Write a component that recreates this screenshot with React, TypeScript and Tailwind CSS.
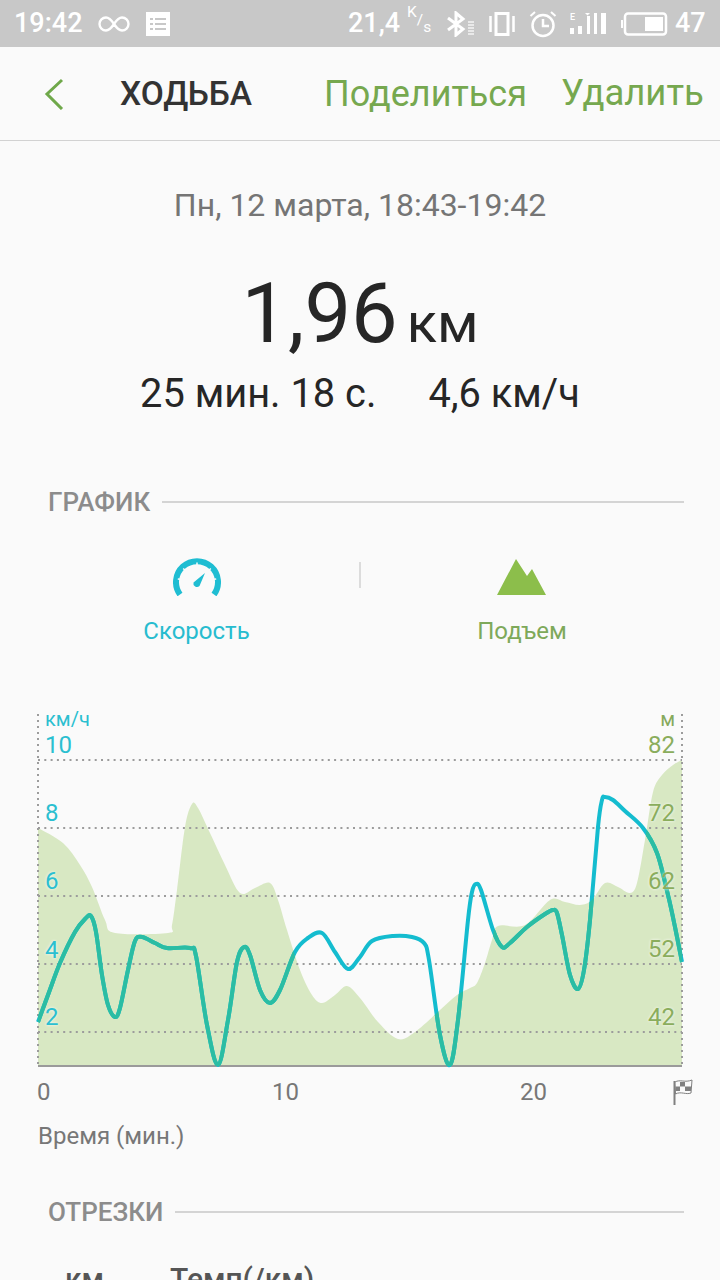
import { useMemo } from 'react'

type Point = [number, number]

const elevationPoints: Point[] = [
  [38, 828], [63, 843], [80, 865], [92, 887], [105, 920], [115, 933], [168, 933], [172, 925], [177, 890],
  [185, 827], [192, 804], [198, 808], [210, 833], [225, 865], [240, 893], [255, 888], [270, 883], [278, 900],
  [287, 930], [300, 970], [312, 995], [322, 1003], [335, 995], [347, 986], [360, 998], [378, 1022], [398, 1039],
  [415, 1032], [440, 1010], [457, 995], [470, 988], [477, 983], [485, 963], [492, 940], [498, 926], [525, 925],
  [550, 900], [565, 902], [580, 905], [592, 900], [605, 883], [618, 887], [630, 893], [637, 883], [645, 840],
  [653, 792], [662, 775], [673, 765], [682, 760],
]

const speedPoints: Point[] = [
  [38, 1022], [48, 995], [60, 963], [75, 932], [85, 919], [91, 916], [96, 932], [102, 975], [108, 1005], [115, 1017], [120, 1008],
  [128, 970], [135, 941], [142, 937], [155, 943], [167, 948], [190, 948], [196, 956], [207, 1025], [218, 1065], [228, 1020],
  [237, 962], [244, 947], [250, 955], [260, 990], [270, 1003], [280, 990], [295, 952], [308, 938], [322, 933], [335, 952],
  [348, 969], [360, 957], [372, 941], [393, 936], [412, 937], [424, 943], [429, 960], [440, 1035], [450, 1065], [458, 1020],
  [468, 920], [472, 892], [476, 884], [481, 890], [493, 930], [502, 947], [510, 943], [527, 927], [545, 914], [553, 910], [557, 913],
  [562, 935], [570, 975], [578, 989], [584, 970], [590, 920], [598, 827], [602, 800], [605, 797], [613, 800], [625, 811], [643, 828],
  [657, 853], [668, 895], [675, 927], [682, 962],
]

// catmull-rom through the read-off points, so the lines stay smooth
function smoothPath(points: Point[]) {
  let d = `M${points[0][0]} ${points[0][1]}`
  for (let i = 0; i < points.length - 1; i++) {
    const p0 = points[Math.max(i - 1, 0)]
    const p1 = points[i]
    const p2 = points[i + 1]
    const p3 = points[Math.min(i + 2, points.length - 1)]
    const c1x = p1[0] + (p2[0] - p0[0]) / 6
    const c1y = p1[1] + (p2[1] - p0[1]) / 6
    const c2x = p2[0] - (p3[0] - p1[0]) / 6
    const c2y = p2[1] - (p3[1] - p1[1]) / 6
    d += ` C${c1x.toFixed(1)} ${c1y.toFixed(1)} ${c2x.toFixed(1)} ${c2y.toFixed(1)} ${p2[0]} ${p2[1]}`
  }
  return d
}

const leftLabels = [
  { text: '10', className: 'top-[17px]' },
  { text: '8', className: 'top-[85px]' },
  { text: '6', className: 'top-[153px]' },
  { text: '4', className: 'top-[222px]' },
  { text: '2', className: 'top-[289px]' },
]

const rightLabels = [
  { text: '82', className: 'top-[17px]' },
  { text: '72', className: 'top-[85px]' },
  { text: '62', className: 'top-[153px]' },
  { text: '52', className: 'top-[221px]' },
  { text: '42', className: 'top-[289px]' },
]

function StatusBar() {
  return (
    <div className="flex h-[47px] items-center bg-[#c8c8c8] font-medium text-white">
      <span className="ml-[14px] w-[70px] text-[27px] leading-none">19:42</span>
      <svg className="ml-[14px]" width="32" height="18" viewBox="0 0 32 18" fill="none" stroke="white" strokeWidth="2.4">
        <path d="M16 9C13 4.5 11 2.5 8 2.5a6.5 6.5 0 0 0 0 13c3 0 5-2 8-6.500C19 4.500 21 2.500 24 2.500a6.500 6.500 0 0 1 0 13c-3 0-5-2-8-6.500Z" />
      </svg>
      <svg className="ml-[16px]" width="24" height="24" viewBox="0 0 24 24">
        <rect width="24" height="24" fill="white" />
        <path d="M4 6h3v2H4zM9 6h11v2H9zM4 11h3v2H4zM9 11h11v2H9zM4 16h3v2H4zM9 16h11v2H9z" fill="#c8c8c8" />
      </svg>
      <span className="ml-[178px] w-[54px] text-[27px] leading-none">21,4</span>
      <span className="ml-[5px] flex w-[26px] text-[15.5px] leading-none font-normal">
        <span className="-mt-[7px]">K</span>
        <span className="mt-[1px]">/</span>
        <span className="mt-[8px]">s</span>
      </span>
      <svg className="ml-[13px]" width="30" height="26" viewBox="0 0 30 26" fill="none" stroke="white">
        <path d="M2 7l15 11-7 6V2l7 6L2 19" strokeWidth="3" />
        <path d="M22 11h6M22 14h6M22 17h6M22 20h6M22 23h6" strokeWidth="1.500" opacity="0.8" />
      </svg>
      <svg className="ml-[13px]" width="26" height="24" viewBox="0 0 26 24" fill="none" stroke="white">
        <rect x="7" y="1.500" width="12" height="21" strokeWidth="3" />
        <path d="M1.500 4v16M24.500 4v16" strokeWidth="2.500" />
      </svg>
      <svg className="ml-[14px]" width="28" height="28" viewBox="0 0 28 28" fill="none" stroke="white" strokeWidth="2.500">
        <circle cx="14" cy="15.500" r="10.500" />
        <path d="M14 9v7h6" />
        <path d="M1.500 6L6 2M26.500 6L22 2" strokeWidth="2" />
      </svg>
      <svg className="ml-[13px]" width="36" height="24" viewBox="0 0 36 24" fill="white">
        <text x="0" y="7.500" fontSize="9" fill="white" fontFamily="Roboto, sans-serif">E</text>
        <path d="M0 16h4v6H0zM8 14h4v8H8zM17 4h3v18h-3zM24 1h3v21h-3zM31 1h5v21h-5z" />
        <path d="M15 1h5l-2.500 2.500z" />
      </svg>
      <svg className="ml-[15px]" width="47" height="24" viewBox="0 0 47 24" fill="none" stroke="white">
        <path d="M1 8v8" strokeWidth="2" />
        <rect x="4" y="1.500" width="41" height="21" rx="3" strokeWidth="2.500" />
        <rect x="24" y="5" width="18" height="14" fill="white" stroke="none" />
      </svg>
      <span className="ml-[7px] text-[27px] leading-none">47</span>
    </div>
  )
}

function Header() {
  return (
    <div className="flex h-[94px] items-center border-b border-[#d2d2d2]">
      <svg className="ml-[44px]" width="20" height="32" viewBox="0 0 20 32" fill="none" stroke="#6fa84a" strokeWidth="3">
        <path d="M18 2L3 16l15 15" />
      </svg>
      <span className="ml-[56px] text-[33.5px] leading-none font-medium text-[#333333]">ХОДЬБА</span>
      <span className="ml-[72px] text-[36px] leading-none text-[#76a84f]">Поделиться</span>
      <span className="ml-[34px] text-[36.5px] leading-none text-[#76a84f]">Удалить</span>
    </div>
  )
}

function SectionTitle({ title }: { title: string }) {
  return (
    <div className="flex h-[40px] items-center pl-[48px] pr-[36px]">
      <span className="text-[26px] leading-none font-medium text-[#8c8c8c]">{title}</span>
      <div className="ml-[12px] h-[2px] flex-1 bg-[#d4d4d4]" />
    </div>
  )
}

function Tabs() {
  return (
    <div className="mt-[36px] flex h-[100px]">
      <div className="ml-[34px] flex w-[325px] flex-col items-center">
        <svg width="48" height="38" viewBox="0 0 48 38" fill="none">
          <path d="M7 36.500A21 21 0 1 1 41 36.500" stroke="#1fbdd2" strokeWidth="6" />
          <path d="M24 4.500v3M37.800 10.500l-1.800 1.800M10.200 10.500l1.800 1.800M43.200 20.900l-2.500.4M4.800 20.900l2.500.4" stroke="#fafafa" strokeWidth="1.500" />
          <path d="M32 15l-5.500 13a3.600 3.600 0 0 1-6-3.500z" fill="#1fbdd2" />
        </svg>
        <span className="mt-[21px] text-[24px] leading-[28px] text-[#27bccf]">Скорость</span>
      </div>
      <div className="mt-[4px] h-[26px] w-[2px] bg-[#dcdcdc]" />
      <div className="flex w-[322px] flex-col items-center">
        <svg width="50" height="38" viewBox="0 0 50 38" fill="#8cbe4b">
          <path d="M0 37L19 1l11 17 5-7 14 26z" />
        </svg>
        <span className="mt-[21px] text-[24px] leading-[28px] text-[#7ea95a]">Подъем</span>
      </div>
    </div>
  )
}

function Chart() {
  const elevation = useMemo(() => `${smoothPath(elevationPoints)} L682 1066 L38 1066 Z`, [])
  const speed = useMemo(() => smoothPath(speedPoints), [])

  return (
    <div className="relative ml-[38px] h-[354px] w-[644px]">
      <svg className="block overflow-visible" width="644" height="354" viewBox="38 714 644 354" fill="none">
        <defs>
          <clipPath id="under-elevation">
            <path d={elevation} />
          </clipPath>
        </defs>
        <path d={elevation} fill="#d8e8c3" />
        <path
          d="M38 760H682M38 828H682M38 896H682M38 964H682M38 1032H682"
          stroke="#9c9c9c"
          strokeWidth="2"
          strokeDasharray="2 4.300"
        />
        <path d="M38 714V1066M682 714V1066" stroke="#9c9c9c" strokeWidth="2" strokeDasharray="2 4" />
        <path d="M38 1066H682" stroke="#9a9a9a" strokeWidth="2" />
        <path d={speed} stroke="#14bccf" strokeWidth="4" strokeLinejoin="round" />
        <path d={speed} stroke="#2bbda3" strokeWidth="4" strokeLinejoin="round" clipPath="url(#under-elevation)" />
      </svg>

      <span className="absolute top-[-7px] left-[7px] text-[20px] leading-[24px] text-[#2bbfd0]">км/ч</span>
      <span className="absolute top-[-7px] right-[7px] text-[20px] leading-[24px] text-[#86a95c]">м</span>
      {leftLabels.map((label) => (
        <span
          key={label.text}
          className={`absolute left-[7px] text-[24px] leading-[28px] text-[#2bbfd0] [text-shadow:0_0_3px_#fafafa] ${label.className}`}
        >
          {label.text}
        </span>
      ))}
      {rightLabels.map((label) => (
        <span
          key={label.text}
          className={`absolute right-[7px] text-[24px] leading-[28px] text-[#8aad5c] [text-shadow:0_0_3px_#fafafa] ${label.className}`}
        >
          {label.text}
        </span>
      ))}
    </div>
  )
}

function AxisRow() {
  return (
    <div className="mt-[10px] flex h-[28px] items-center pl-[37px] text-[24px] leading-none text-[#777777]">
      <span className="w-[235px]">0</span>
      <span className="w-[248px]">10</span>
      <span className="w-[153px]">20</span>
      <svg width="20" height="26" viewBox="0 0 20 26">
        <path d="M1.500 2v24" stroke="#808080" strokeWidth="2" />
        <path d="M2 3c5-3 10 1 17-2l-1 13c-5 2-10-2-15.500 1z" fill="#fafafa" stroke="#808080" strokeWidth="1" />
        <path d="M7 3h5v4.500h6v4.500h-6V7.500H7zM2.500 7.500H7V12H2.500z" fill="#808080" />
      </svg>
    </div>
  )
}

export default function App() {
  return (
    <div className="h-[1280px] w-[720px] overflow-hidden bg-[#fafafa] font-['Roboto',sans-serif]">
      <StatusBar />
      <Header />

      <div className="mt-[44px] flex h-[40px] items-center justify-center text-[32px] leading-none text-[#757575]">
        Пн, 12 марта, 18:43-19:42
      </div>

      <div className="mt-[41px] flex h-[96px] items-baseline justify-center text-[#262626]">
        <span className="text-[83px] leading-[96px]">1,96</span>
        <span className="ml-[9px] text-[56px] leading-[96px]">км</span>
      </div>

      <div className="mt-[10px] flex h-[44px] items-center justify-center text-[39.8px] leading-none text-[#262626]">
        <span>25 мин. 18 с.</span>
        <span className="ml-[52px]">4,6 км/ч</span>
      </div>

      <div className="mt-[66px]">
        <SectionTitle title="ГРАФИК" />
      </div>

      <Tabs />

      <div className="mt-[56px]">
        <Chart />
      </div>

      <AxisRow />

      <div className="mt-[16px] pl-[38px] text-[24px] leading-[28px] text-[#777777]">Время (мин.)</div>

      <div className="mt-[42px]">
        <SectionTitle title="ОТРЕЗКИ" />
      </div>

      <div className="mt-[31px] flex text-[30px] leading-[32px] font-medium text-[#555555]">
        <span className="ml-[65px] w-[105px]">км</span>
        <span>Темп(/км)</span>
      </div>
    </div>
  )
}
